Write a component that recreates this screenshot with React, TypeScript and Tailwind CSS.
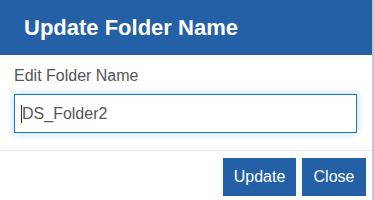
import React from 'react';

const App = () => {
  return (
    <div className="flex h-[200px] w-[374px] overflow-hidden bg-white font-['Liberation_Sans',Arial,sans-serif]">
      <div className="flex w-[372px] flex-col">
        <div className="flex h-[55px] items-center bg-[#2360a6] px-[24px]">
          <h2 className="text-[22px] font-bold leading-none text-white">Update Folder Name</h2>
        </div>
        <div className="px-[14px] pt-[12px] pb-[17px]">
          <label className="block text-[16px] leading-[18px] text-[#555]">Edit Folder Name</label>
          <div className="relative mt-[9px]">
            <input
              className="h-[39px] w-[343px] border border-[#1a74d2] bg-white pl-[7px] text-[16px] text-[#555] caret-transparent shadow-[0_0_8px_rgba(102,175,233,0.45)] outline-none"
              defaultValue="DS_Folder2"
            />
            <span className="absolute left-[7px] top-[11px] h-[18px] w-px bg-[#333]" />
          </div>
        </div>
        <div className="flex justify-end gap-[6px] border-t border-[#e5e5e5] pt-[7px] pr-[6px]">
          <button className="h-[38px] w-[73px] bg-[#2360a6] text-[16px] text-white">Update</button>
          <button className="h-[38px] w-[64px] bg-[#2360a6] text-[16px] text-white">Close</button>
        </div>
      </div>
      <div className="h-full w-[2px] bg-[#c6c6c6]" />
    </div>
  );
};

export default App;
